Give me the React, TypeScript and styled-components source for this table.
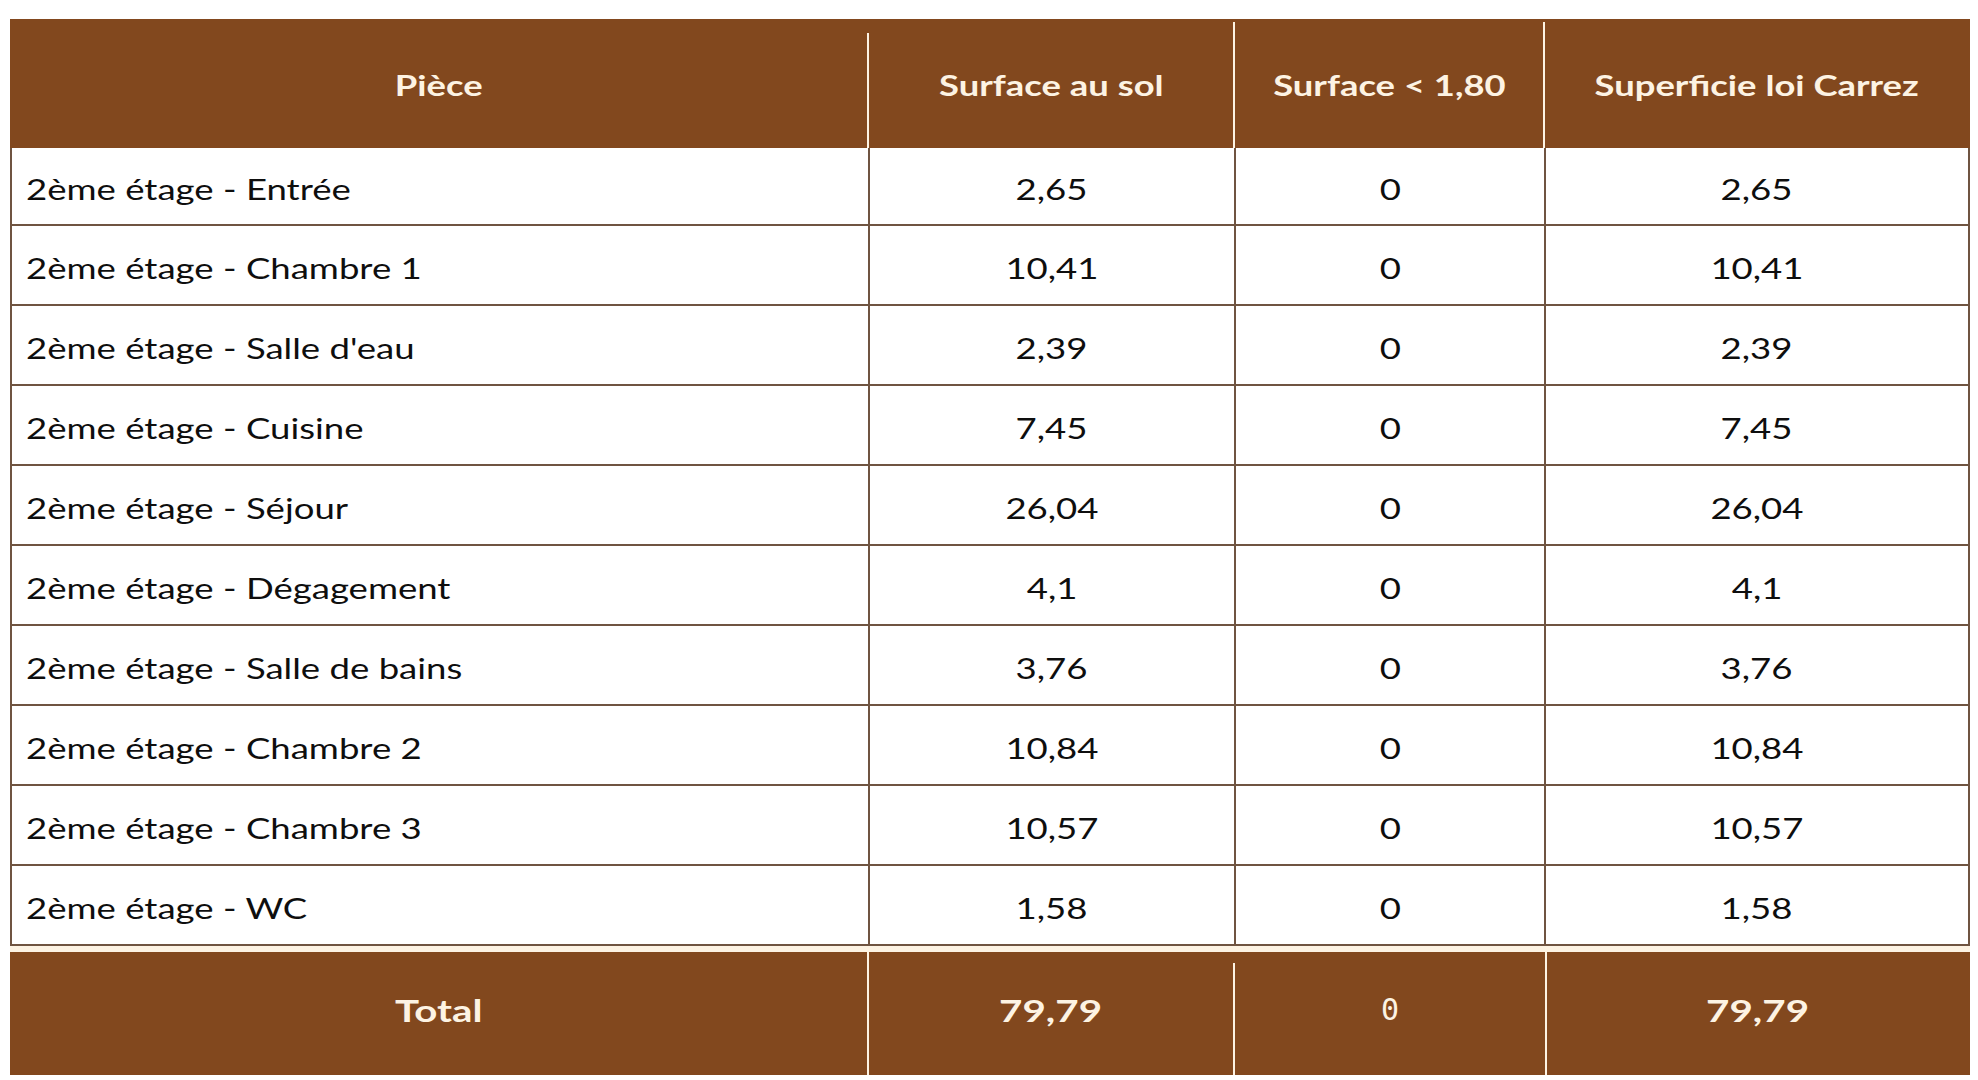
import React from "react";
import styled, { createGlobalStyle } from "styled-components";

const BROWN = "#82481e";
const CREAM = "#fdf3e3";
const LINE = "#6f5441";

const Global = createGlobalStyle`
  html, body { margin: 0; padding: 0; background: #ffffff; }
  body { font-family: Lato, "Open Sans", sans-serif; }
`;

const Page = styled.div`
  padding: 19px 0 0 10px;
  width: 1960px;
`;

const Header = styled.div`
  display: grid;
  grid-template-columns: 858px 366px 310px 426px;
  height: 129px;
  background: ${BROWN};
`;

const HeadCell = styled.div<{ $lineTop?: number }>`
  position: relative;
  display: flex;
  align-items: center;
  justify-content: center;
  padding-top: 2px;
  color: ${CREAM};
  font-weight: 700;
  font-size: 28px;
  ${(p) =>
    p.$lineTop !== undefined &&
    `
    &::before {
      content: "";
      position: absolute;
      left: -1px;
      top: ${p.$lineTop}px;
      bottom: 0;
      width: 2px;
      background: ${CREAM};
    }
  `}
`;

const Body = styled.div`
  border-left: 2px solid ${LINE};
  border-right: 2px solid ${LINE};
`;

const Row = styled.div<{ $first?: boolean }>`
  display: grid;
  grid-template-columns: 856px 366px 310px 424px;
  height: ${(p) => (p.$first ? 78 : 80)}px;
  border-bottom: 2px solid ${LINE};
  box-sizing: border-box;
`;

const Cell = styled.div<{ $left?: boolean; $divider?: boolean }>`
  display: flex;
  align-items: center;
  justify-content: ${(p) => (p.$left ? "flex-start" : "center")};
  padding: 4px 0 0 ${(p) => (p.$left ? "14px" : "0")};
  color: #0e0e0e;
  font-size: 29px;
  ${(p) => (p.$divider ? `border-left: 2px solid ${LINE};` : "")}
`;

const Txt = styled.span<{ $left?: boolean; $sx?: number }>`
  display: inline-block;
  white-space: nowrap;
  transform: scaleX(${(p) => p.$sx ?? 1.26});
  transform-origin: ${(p) => (p.$left ? "left center" : "center center")};
`;

const Gap = styled.div`
  height: 6px;
  background: ${CREAM};
`;

const TotalRow = styled.div`
  display: grid;
  grid-template-columns: 858px 366px 312px 424px;
  height: 123px;
  background: ${BROWN};
`;

const TotalCell = styled(HeadCell)<{ $mono?: boolean }>`
  padding: 0 0 8px 0;
  font-size: 31px;
  ${(p) =>
    p.$mono
      ? `font-family: "DejaVu Sans Mono", "Liberation Mono", monospace; font-weight: 400; font-size: 30px;`
      : ""}
`;

const rows: [string, string, string, string][] = [
  ["2ème étage - Entrée", "2,65", "0", "2,65"],
  ["2ème étage - Chambre 1", "10,41", "0", "10,41"],
  ["2ème étage - Salle d'eau", "2,39", "0", "2,39"],
  ["2ème étage - Cuisine", "7,45", "0", "7,45"],
  ["2ème étage - Séjour", "26,04", "0", "26,04"],
  ["2ème étage - Dégagement", "4,1", "0", "4,1"],
  ["2ème étage - Salle de bains", "3,76", "0", "3,76"],
  ["2ème étage - Chambre 2", "10,84", "0", "10,84"],
  ["2ème étage - Chambre 3", "10,57", "0", "10,57"],
  ["2ème étage - WC", "1,58", "0", "1,58"],
];

export default function App() {
  return (
    <>
      <Global />
      <Page>
        <Header>
          <HeadCell>
            <Txt $sx={1.3}>Pièce</Txt>
          </HeadCell>
          <HeadCell $lineTop={14}>
            <Txt $sx={1.3}>Surface au sol</Txt>
          </HeadCell>
          <HeadCell $lineTop={3}>
            <Txt $sx={1.3}>Surface &lt; 1,80</Txt>
          </HeadCell>
          <HeadCell $lineTop={3}>
            <Txt $sx={1.3}>Superficie loi Carrez</Txt>
          </HeadCell>
        </Header>
        <Body>
          {rows.map((r, i) => (
            <Row key={i} $first={i === 0}>
              <Cell $left>
                <Txt $left>{r[0]}</Txt>
              </Cell>
              <Cell $divider>
                <Txt>{r[1]}</Txt>
              </Cell>
              <Cell $divider>
                <Txt>{r[2]}</Txt>
              </Cell>
              <Cell $divider>
                <Txt>{r[3]}</Txt>
              </Cell>
            </Row>
          ))}
        </Body>
        <Gap />
        <TotalRow>
          <TotalCell>
            <Txt $sx={1.3}>Total</Txt>
          </TotalCell>
          <TotalCell $lineTop={0}>
            <Txt $sx={1.3}>79,79</Txt>
          </TotalCell>
          <TotalCell $lineTop={11} $mono>
            <Txt $sx={1.0}>0</Txt>
          </TotalCell>
          <TotalCell $lineTop={0}>
            <Txt $sx={1.3}>79,79</Txt>
          </TotalCell>
        </TotalRow>
      </Page>
    </>
  );
}
